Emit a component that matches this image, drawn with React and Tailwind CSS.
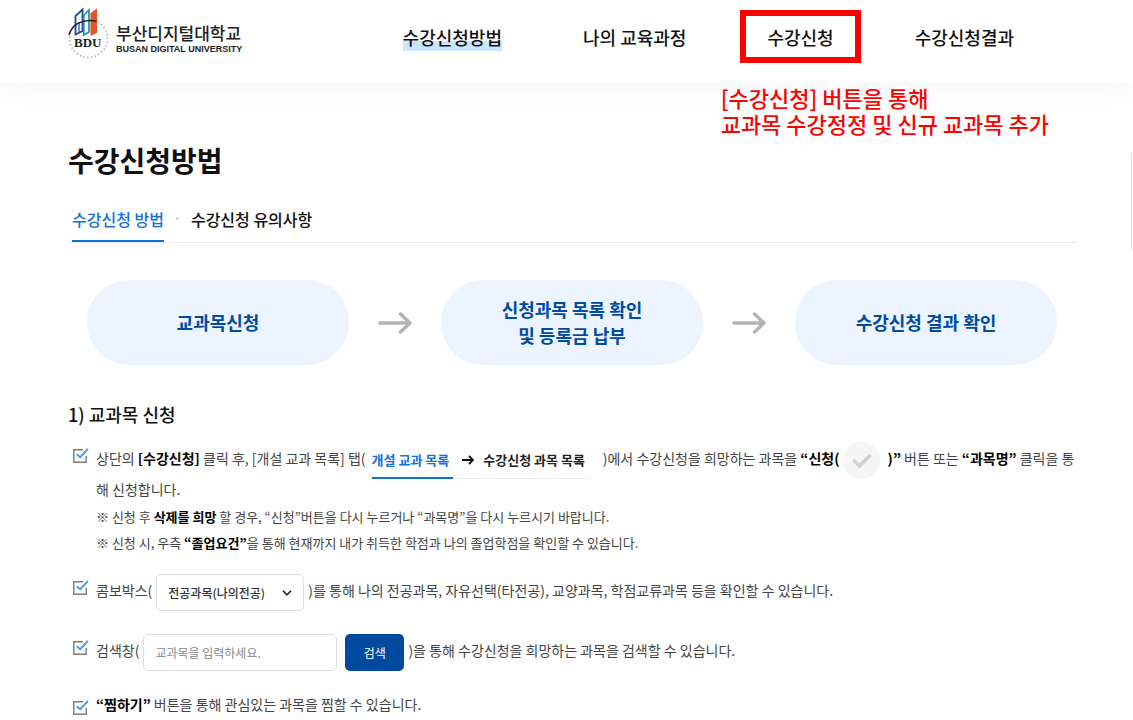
import { useState } from "react";

const NAV_ITEMS = [
  { label: "수강신청방법", active: true },
  { label: "나의 교육과정" },
  { label: "수강신청", boxed: true },
  { label: "수강신청결과" },
];

const TABS = ["수강신청 방법", "수강신청 유의사항"];

const STEPS = [["교과목신청"], ["신청과목 목록 확인", "및 등록금 납부"], ["수강신청 결과 확인"]];

function Logo() {
  return (
    <a href="#" className="flex items-center gap-2 text-[#222]">
      <svg width="40" height="52" viewBox="0 0 40 52" aria-hidden="true">
        <path d="M30 14A19 19 0 1 1 2 26" fill="none" stroke="#9a9a9a" strokeWidth="1.6" strokeDasharray="1.2 2.6" />
        <path d="M7.5 8L14.5 1.5V23L7.5 26.5Z" fill="#fff" stroke="#1c4a9c" strokeWidth="1.8" />
        <path d="M11 14V25" stroke="#1c4a9c" strokeWidth="1.2" />
        <path d="M15.8 7.5L21 2V24L15.8 27Z" fill="#fff" stroke="#2795a8" strokeWidth="1.8" />
        <path d="M22.5 5L29 0.5V25L22.5 28Z" fill="#e2542b" />
        <path d="M1 27C4 16 14 11 28.5 13" fill="none" stroke="#1d1d1d" strokeWidth="1.5" />
        <rect x="5" y="28.5" width="31" height="11" fill="#fff" />
        <text x="6" y="39" fontFamily="Liberation Serif, serif" fontWeight="700" fontSize="13" fill="#1d1d1d">BDU</text>
      </svg>
      <span className="flex flex-col pt-2.5">
        <span className="text-[17px] leading-5 font-medium">부산디지털대학교</span>
        <span className="font-['Liberation_Sans',sans-serif] text-[9px] leading-3 font-bold">BUSAN DIGITAL UNIVERSITY</span>
      </span>
    </a>
  );
}

function StepArrow() {
  return (
    <svg width="34" height="24" viewBox="0 0 34 24" fill="none" stroke="#b3b3b3" strokeWidth="3.4" strokeLinecap="round" strokeLinejoin="round" className="mx-[29px] shrink-0" aria-hidden="true">
      <path d="M2 12H32M22.5 3L32 12L22.5 21" />
    </svg>
  );
}

function BulletItem({ className = "", children }) {
  return (
    <li className={`flex gap-[7px] ${className}`}>
      <svg width="16" height="16" viewBox="0 0 16 16" fill="none" className="mt-1.5 shrink-0" aria-hidden="true">
        <path d="M10 1.7H0.8V14.3H13.2V8" stroke="#7d7d7d" strokeWidth="1.4" />
        <path d="M3.8 6.2L7.2 9.3L14.8 1" stroke="#4a9ff5" strokeWidth="2" />
      </svg>
      <div className="min-w-0 flex-1">{children}</div>
    </li>
  );
}

export default function App() {
  const [tab, setTab] = useState(0);
  const [keyword, setKeyword] = useState("");

  return (
    <div className="relative min-h-screen bg-[#fefefe] font-['Noto_Sans_CJK_KR',sans-serif] text-[#444]">
      <header className="flex h-[82px] items-start bg-white pl-17 shadow-[0_4px_30px_rgba(0,0,0,0.04)]">
        <div className="pt-2">
          <Logo />
        </div>
        <nav className="ml-auto flex gap-[81px] pt-6 pr-[119px] text-lg leading-[26px] font-medium text-[#111]">
          {NAV_ITEMS.map((item) => (
            <a key={item.label} href="#" className="relative">
              {item.active && <span className="absolute inset-x-0 -bottom-px h-2.5 bg-[#cce5ff]" />}
              {item.boxed && <span className="absolute -inset-x-[27px] -top-3.5 -bottom-[13px] border-6 border-[#ff0000]" />}
              <span className="relative">{item.label}</span>
            </a>
          ))}
        </nav>
      </header>

      {/* Callout under the highlighted menu */}
      <p className="absolute top-[84px] right-[84px] text-[22px] leading-[26px] font-medium text-[#ff0000]">
        [수강신청] 버튼을 통해
        <br />
        교과목 수강정정 및 신규 교과목 추가
      </p>
      <div className="absolute top-[152px] right-0 h-[98px] w-0.5 rounded-l-sm border-l border-[#ddd]" />

      <main className="pt-[58px] pr-[57px] pb-1 pl-17">
        <h1 className="text-[28px] leading-10 font-bold text-[#111]">수강신청방법</h1>

        <div role="tablist" className="mt-4 flex h-[47px] items-stretch border-b border-[#eee] pl-1">
          {TABS.map((label, i) => (
            <div key={label} className="flex">
              {i > 0 && <span className="mx-3 mt-[21px] size-[3px] rounded-full bg-[#ccc]" />}
              <button
                role="tab"
                aria-selected={tab === i}
                onClick={() => setTab(i)}
                className={`border-b-2 text-base leading-[46px] font-medium ${
                  tab === i ? "border-[#1370d6] text-[#1370d6]" : "border-transparent text-[#111]"
                }`}
              >
                {label}
              </button>
            </div>
          ))}
        </div>

        <ol className="mt-[37px] flex items-center px-[19px]">
          {STEPS.map((lines, i) => (
            <li key={lines[0]} className="contents">
              {i > 0 && <StepArrow />}
              <div className="flex h-[85px] flex-1 flex-col items-center justify-center rounded-[42px] bg-[#ebf4ff] pb-0.5 text-lg leading-[26px] font-bold text-[#004ba0]">
                {lines.map((line) => (
                  <span key={line}>{line}</span>
                ))}
              </div>
            </li>
          ))}
        </ol>

        <h2 className="mt-[35px] text-lg leading-7 font-medium text-[#111]">1) 교과목 신청</h2>

        <ul className="mt-3.5 pl-[5px] text-sm">
          <BulletItem>
            <p className="leading-5">
              상단의 <b className="text-black">[수강신청]</b> 클릭 후, [개설 교과 목록] 탭(
              <span className="mr-[11px] ml-1.5 inline-flex w-[217px] items-center border-b border-[#eee] align-middle text-[13px] leading-[34px] font-bold">
                <span className="-mb-px border-b-2 border-[#1370d6] pr-1 text-[#1370d6]">개설 교과 목록</span>
                <svg width="12" height="10" viewBox="0 0 12 10" fill="none" stroke="#111" strokeWidth="1.8" className="mx-[9px]" aria-hidden="true">
                  <path d="M0 5H11M7 1L11 5L7 9" />
                </svg>
                <span className="text-[#222]">수강신청 과목 목록</span>
              </span>{" "}
              )에서 수강신청을 희망하는 과목을 <b className="text-black">“신청(</b>
              <span className="mx-1 inline-flex size-[37px] items-center justify-center rounded-full bg-[#f5f5f5] align-middle">
                <svg width="20" height="16" viewBox="0 0 20 16" fill="none" stroke="#d0d0d0" strokeWidth="3.6" strokeLinecap="round" strokeLinejoin="round" aria-hidden="true">
                  <path d="M2.5 8L7.5 13L17.5 3" />
                </svg>
              </span>{" "}
              <b className="text-black">)”</b> 버튼 또는 <b className="text-black">“과목명”</b> <span>클릭을 통</span>
              <span>해 신청합니다.</span>
            </p>
            <div className="mt-[5px] text-[13px] leading-[26px]">
              <p>
                ※ 신청 후 <b className="text-black">삭제를 희망</b> 할 경우, “신청”버튼을 다시 누르거나 “과목명”을 다시 누르시기 바랍니다.
              </p>
              <p>
                ※ 신청 시, 우측 <b className="text-black">“졸업요건”</b>을 통해 현재까지 내가 취득한 학점과 나의 졸업학점을 확인할 수 있습니다.
              </p>
            </div>
          </BulletItem>

          <BulletItem className="mt-[18px]">
            <div className="flex items-start gap-1 leading-8">
              <label htmlFor="course-type">콤보박스(</label>
              <span className="relative">
                <select id="course-type" className="block h-[37px] w-[148px] appearance-none rounded-[5px] border border-[#ddd] bg-white pl-[11px] text-xs font-medium text-[#333]">
                  <option>전공과목(나의전공)</option>
                </select>
                <svg width="10" height="6" viewBox="0 0 10 6" fill="none" stroke="#222" strokeWidth="1.6" className="pointer-events-none absolute top-4 right-3" aria-hidden="true">
                  <path d="M1 0.8L5 4.8L9 0.8" />
                </svg>
              </span>
              <span>)를 통해 나의 전공과목, 자유선택(타전공), 교양과목, 학점교류과목 등을 확인할 수 있습니다.</span>
            </div>
          </BulletItem>

          <BulletItem className="mt-[23px]">
            <div className="flex items-start gap-1 leading-8">
              <label htmlFor="keyword">검색창(</label>
              <input
                id="keyword"
                type="text"
                value={keyword}
                onChange={(e) => setKeyword(e.target.value)}
                placeholder="교과목을 입력하세요."
                className="mr-1 h-[37px] w-[194px] rounded-[5px] border border-[#ddd] bg-white px-[11px] text-xs placeholder:text-[#888]"
              />
              <button className="h-[37px] w-[59px] rounded-[5px] bg-[#004ba0] text-xs text-white">검색</button>
              <span>)을 통해 수강신청을 희망하는 과목을 검색할 수 있습니다.</span>
            </div>
          </BulletItem>

          <BulletItem className="mt-[23px]">
            <p className="leading-5">
              <b className="text-black">“찜하기”</b> 버튼을 통해 관심있는 과목을 찜할 수 있습니다.
            </p>
          </BulletItem>
        </ul>
      </main>
    </div>
  );
}
